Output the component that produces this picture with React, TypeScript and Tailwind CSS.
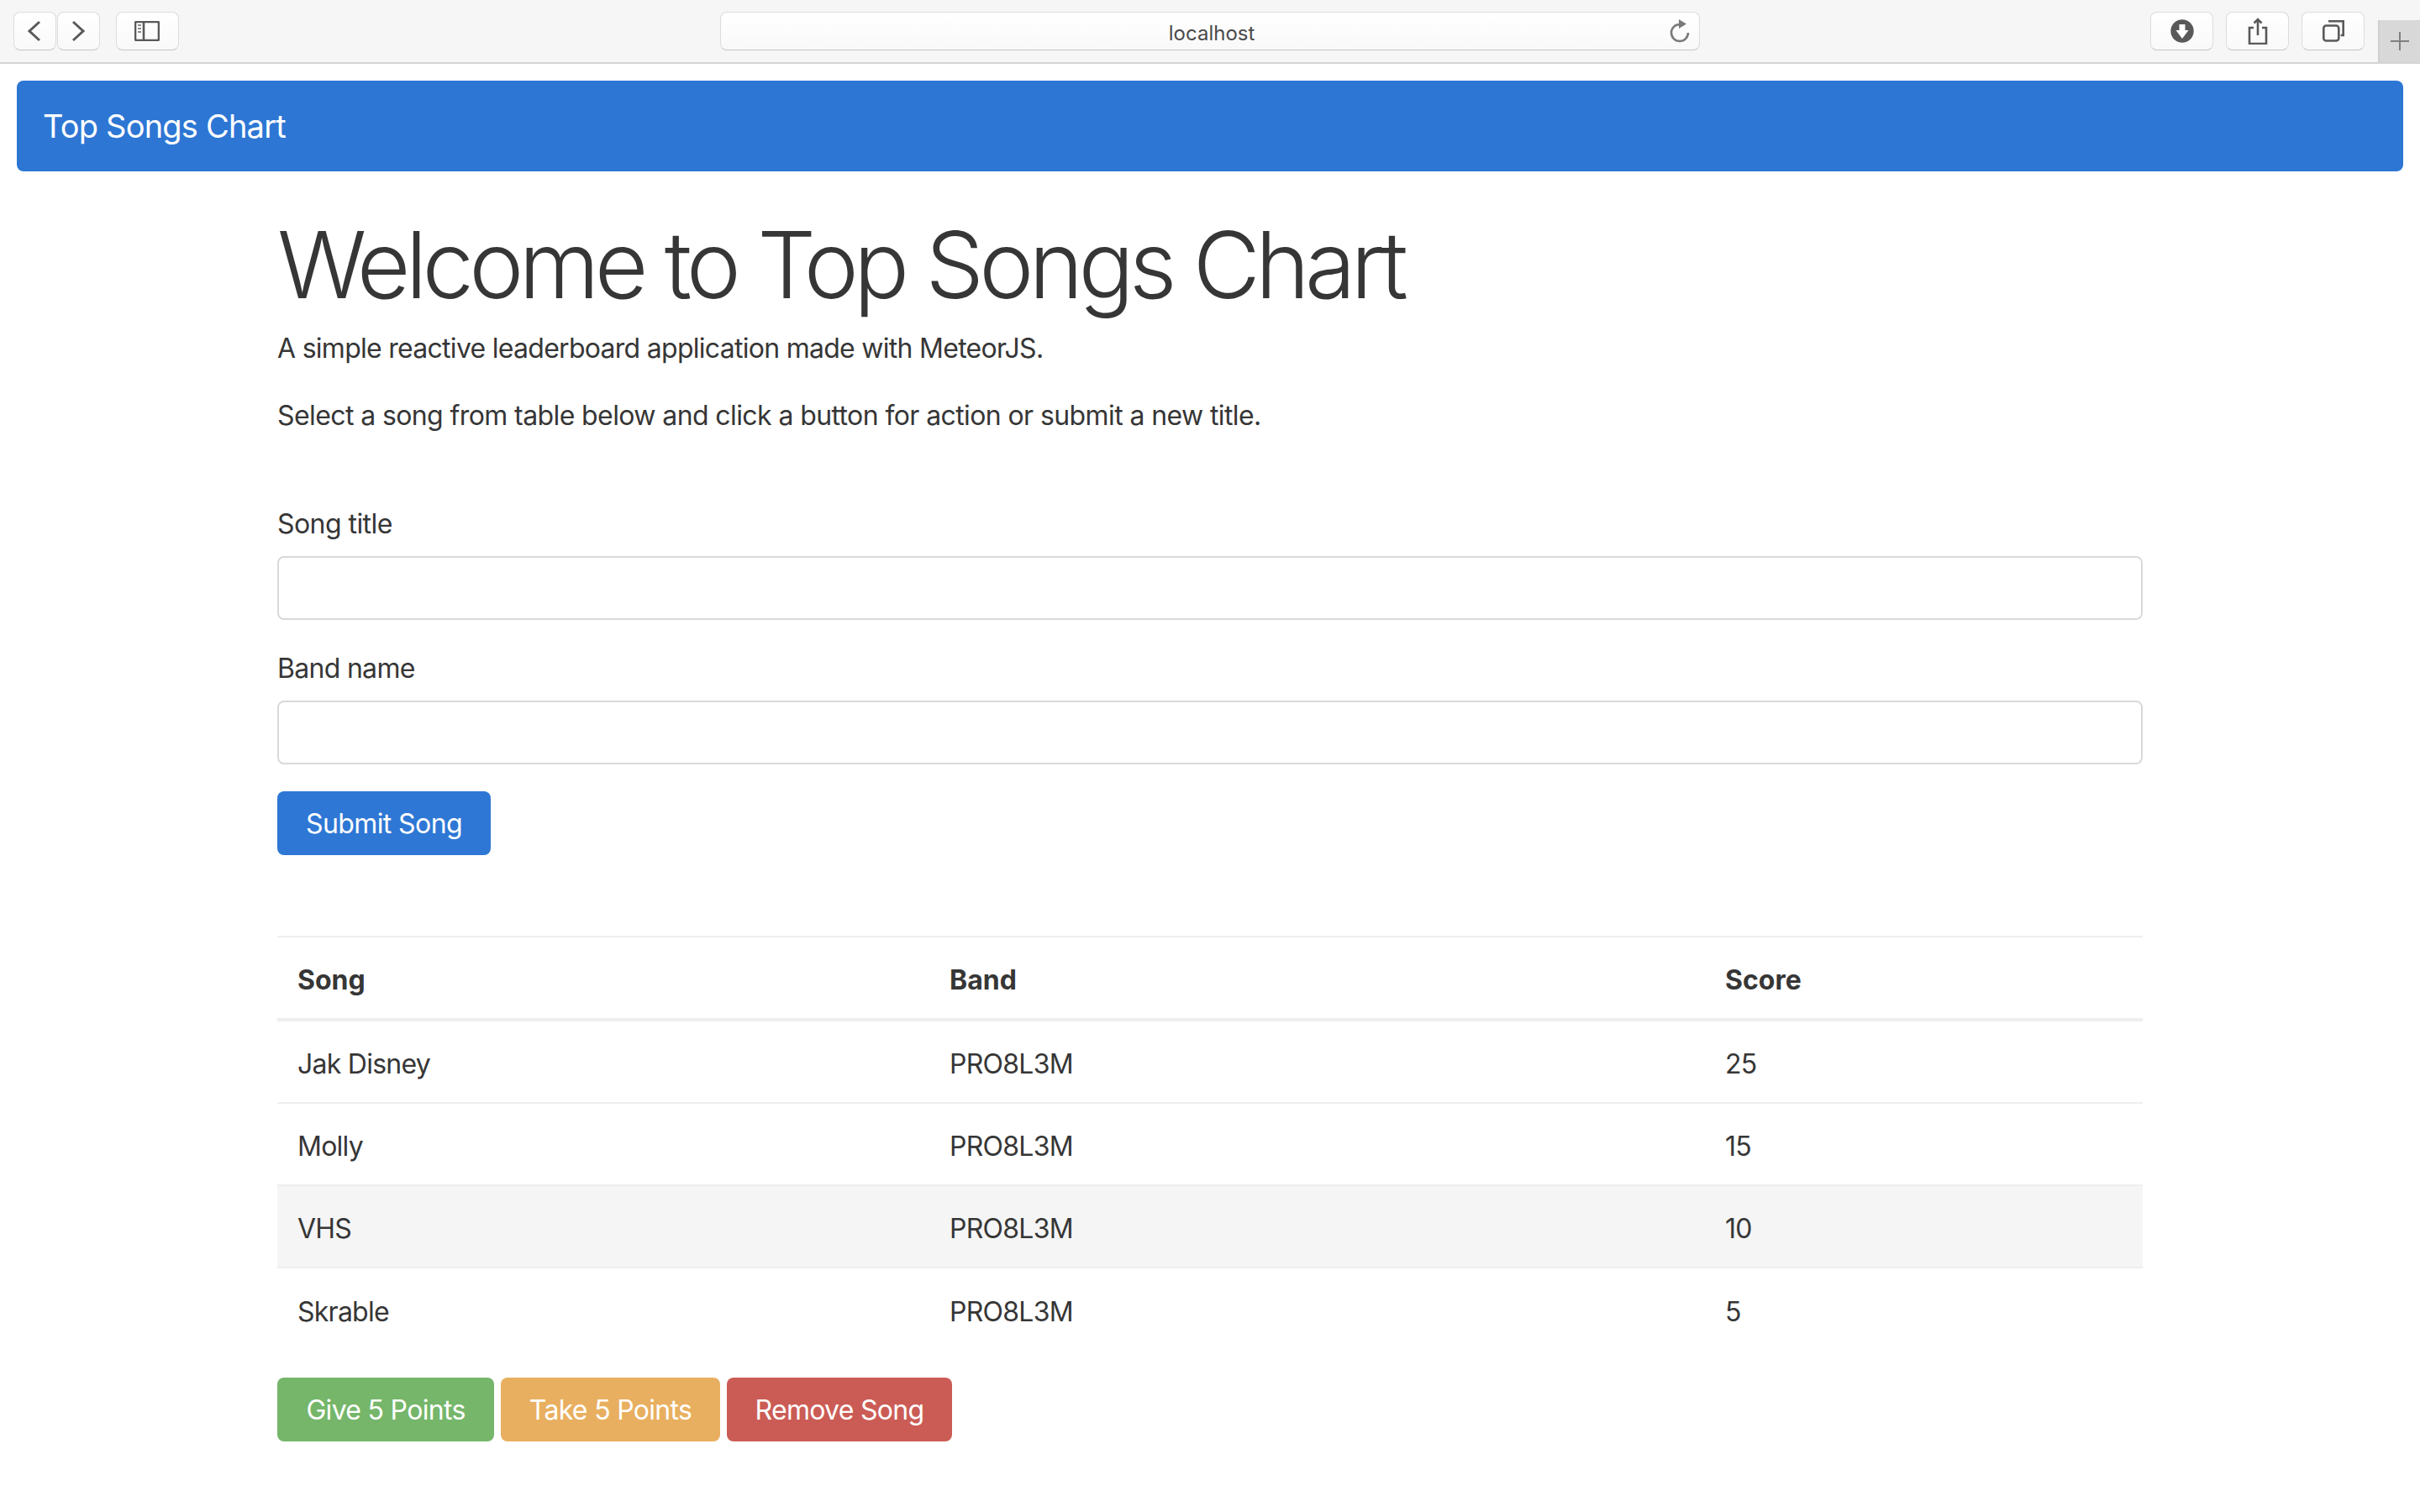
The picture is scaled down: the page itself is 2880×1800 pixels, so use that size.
const rows = [
  { song: "Jak Disney", band: "PRO8L3M", score: 25, active: false },
  { song: "Molly", band: "PRO8L3M", score: 15, active: false },
  { song: "VHS", band: "PRO8L3M", score: 10, active: true },
  { song: "Skrable", band: "PRO8L3M", score: 5, active: false },
];

const toolBtn =
  "flex h-[46px] items-center justify-center rounded-[8px] border border-[#dcdcdc] border-b-[#c6c6c6] bg-gradient-to-b from-white to-[#f9f9f9]";

const stroke = { fill: "none", stroke: "#595959", strokeWidth: 2.6 } as const;

export default function App() {
  return (
    <div className="min-h-[1800px] bg-white font-['Inter','Liberation_Sans',sans-serif] text-[#363636]">
      <div className="flex h-[76px] items-center border-b-2 border-[#d4d4d4] bg-[#f6f6f6] pb-[1px] pl-[16px]">
        <div className={`${toolBtn} w-[51px]`}>
          <svg width="20" height="28" viewBox="0 0 20 28"><path d="M16 3 4 14l12 11" {...stroke} strokeWidth={3} /></svg>
        </div>
        <div className={`${toolBtn} ml-[1px] w-[51px]`}>
          <svg width="20" height="28" viewBox="0 0 20 28"><path d="M4 3l12 11L4 25" {...stroke} strokeWidth={3} /></svg>
        </div>
        <div className={`${toolBtn} ml-[19px] w-[75px]`}>
          <svg width="30" height="24" viewBox="0 0 30 24">
            <rect x="1" y="1" width="28" height="22" rx="1.5" {...stroke} />
            <path d="M11 1v22" {...stroke} />
            <path d="M4 5h4M4 9h4M4 13h4" fill="none" stroke="#8a8a8a" strokeWidth="2" />
          </svg>
        </div>
        <div className={`${toolBtn} relative ml-[644px] w-[1167px]`}>
          <span className="translate-x-[2px] translate-y-[3px] text-[24px] text-[#4a4a4a]">localhost</span>
          <svg className="absolute right-[10px] top-[8px]" width="26" height="28" viewBox="0 0 26 28">
            <path d="M13 6A10 10 0 1 0 23 16" fill="none" stroke="#7a7a7a" strokeWidth="2.600" />
            <path d="M12 0l9 5.500-9 5.500z" fill="#7a7a7a" />
          </svg>
        </div>
        <div className={`${toolBtn} ml-[536px] w-[75px]`}>
          <svg width="28" height="28" viewBox="0 0 28 28">
            <circle cx="14" cy="14" r="13.700" fill="#595959" />
            <path d="M10.500 6h7v7h4L14 23 6.500 13h4z" fill="#ffffff" />
          </svg>
        </div>
        <div className={`${toolBtn} ml-[15px] w-[75px]`}>
          <svg width="24" height="32" viewBox="0 0 24 32">
            <path d="M7 12H2v19h20V12h-5M12 21V2M7.500 6.500 12 2l4.500 4.500" {...stroke} />
          </svg>
        </div>
        <div className={`${toolBtn} ml-[15px] w-[75px]`}>
          <svg width="26" height="26" viewBox="0 0 26 26">
            <rect x="1.300" y="6.500" width="18" height="18" rx="3" {...stroke} />
            <path d="M7 1.300h17.700v16.700h-3" {...stroke} />
          </svg>
        </div>
        <div className="relative ml-[16px] flex h-[50px] w-[50px] translate-y-[12px] items-center justify-center border-l-2 border-[#cfcfcf] bg-[#d8d8d8]">
          <svg width="22" height="22" viewBox="0 0 22 22"><path d="M11 0v22M0 11h22" stroke="#808080" strokeWidth="2" /></svg>
        </div>
      </div>

      <div className="px-[20px] pt-[20px]">
        <nav className="flex h-[108px] items-center rounded-[8px] bg-[#2d76d4] px-[31px]">
          <span className="text-[38px] tracking-[-0.8px] text-white">Top Songs Chart</span>
        </nav>
      </div>

      <main className="mx-auto w-[2220px]">
        <h1 className="mt-[47px] text-[110px] leading-[128px] font-light tracking-[-5.85px]">
          Welcome to Top Songs Chart
        </h1>
        <p className="mt-[12px] text-[32px] leading-[48px] tracking-[-0.72px]">A simple reactive leaderboard application made with MeteorJS.</p>
        <p className="mt-[32px] text-[32px] leading-[48px] tracking-[-0.6px]">Select a song from table below and click a button for action or submit a new title.</p>

        <form className="mt-[81px]">
          <label className="block text-[32px] leading-[48px] tracking-[-0.55px]">Song title</label>
          <input className="mt-[14px] block h-[76px] w-full rounded-[8px] border-2 border-[#d9d9d9] bg-white" />
          <label className="mt-[34px] block text-[32px] leading-[48px] tracking-[-0.7px]">Band name</label>
          <input className="mt-[14px] block h-[76px] w-full rounded-[8px] border-2 border-[#d9d9d9] bg-white" />
          <button type="button" className="mt-[32px] h-[76px] w-[254px] rounded-[8px] bg-[#2e77d5] pt-[1px] text-[32px] tracking-[-0.6px] text-white">Submit Song</button>
        </form>

        <table className="mt-[96px] w-full table-fixed border-separate border-spacing-0 text-[32px]">
          <thead>
            <tr className="text-left">
              <th className="h-[102px] w-[776px] border-t-2 border-b-4 border-[#eeeeee] pt-[6px] pl-[24px] font-bold">Song</th>
              <th className="h-[102px] w-[923px] border-t-2 border-b-4 border-[#eeeeee] pt-[6px] pl-[24px] font-bold">Band</th>
              <th className="h-[102px] border-t-2 border-b-4 border-[#eeeeee] pt-[6px] pl-[24px] font-bold">Score</th>
            </tr>
          </thead>
          <tbody className="tracking-[-0.75px]">
            {rows.map((r, i) => {
              const cell = `h-[98px] pt-[5px] pl-[24px] ${i < rows.length - 1 ? "border-b-2 border-[#eeeeee]" : ""} ${r.active ? "bg-[#f5f5f5]" : ""}`;
              return (
                <tr key={r.song}>
                  <td className={cell}>{r.song}</td>
                  <td className={cell}>{r.band}</td>
                  <td className={cell}>{r.score}</td>
                </tr>
              );
            })}
          </tbody>
        </table>

        <div className="mt-[32px] flex gap-[8px]">
          <button type="button" className="h-[76px] w-[258px] rounded-[8px] bg-[#75b66a] pt-[2px] text-[32px] tracking-[-0.7px] text-white">Give 5 Points</button>
          <button type="button" className="h-[76px] w-[261px] rounded-[8px] bg-[#e8af60] pt-[2px] text-[32px] tracking-[-0.7px] text-white">Take 5 Points</button>
          <button type="button" className="h-[76px] w-[268px] rounded-[8px] bg-[#cb5c55] pt-[2px] text-[32px] tracking-[-0.7px] text-white">Remove Song</button>
        </div>
      </main>
    </div>
  );
}
